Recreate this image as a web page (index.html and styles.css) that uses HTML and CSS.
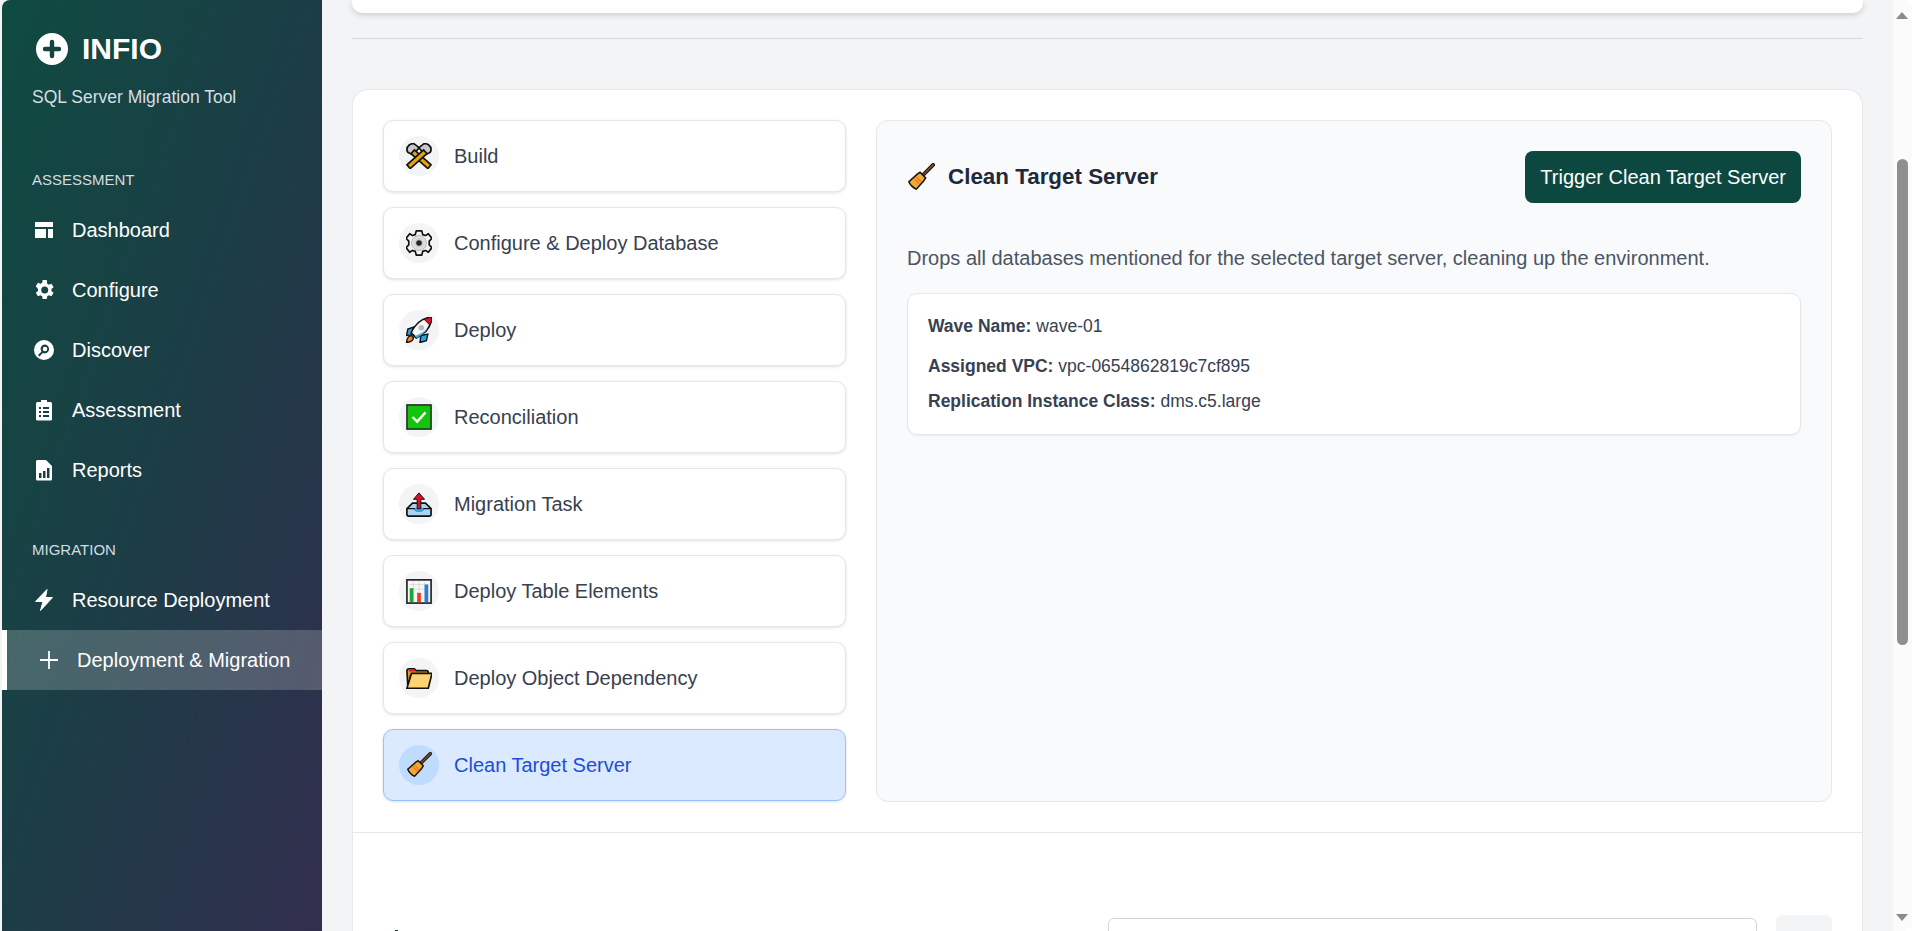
FILE: index.html
```html
<!DOCTYPE html>
<html lang="en">
<head>
<meta charset="utf-8">
<title>INFIO</title>
<link rel="stylesheet" href="styles.css">
</head>
<body>
<aside class="sidebar">
  <div class="brand">
    <svg class="brand-icon" viewBox="0 0 32 32"><circle cx="16" cy="16" r="16" fill="#fff"/><path d="M16 9v14M9 16h14" stroke="#15443f" stroke-width="4.4" stroke-linecap="round"/></svg>
    <span class="brand-name">INFIO</span>
  </div>
  <p class="brand-sub">SQL Server Migration Tool</p>
  <h2 class="nav-head nav-head-first">ASSESSMENT</h2>
  <nav class="nav">
    <a class="nav-item"><svg class="nav-icon" viewBox="0 0 24 24"><path d="M3 4h18v5H3zM3 11h11v9H3zM16 11h5v9h-5z" fill="#fff"/></svg>Dashboard</a>
    <a class="nav-item"><svg class="nav-icon" viewBox="0 0 24 24"><path fill="#fff" d="M19.4 13a7.6 7.6 0 0 0 0-2l2.2-1.7-2.1-3.6-2.6 1a7.5 7.5 0 0 0-1.7-1L14.8 2h-4.2l-.4 2.7a7.5 7.5 0 0 0-1.7 1l-2.6-1-2.1 3.6L6 11a7.6 7.6 0 0 0 0 2l-2.2 1.7 2.1 3.6 2.6-1c.5.4 1.1.7 1.7 1l.4 2.7h4.2l.4-2.7c.6-.3 1.2-.6 1.7-1l2.6 1 2.1-3.6zM12.7 15.5a3.5 3.5 0 1 1 0-7 3.5 3.5 0 0 1 0 7z"/></svg>Configure</a>
    <a class="nav-item"><svg class="nav-icon" viewBox="0 0 24 24"><path fill="#fff" fill-rule="evenodd" d="M12 2a10 10 0 1 1 0 20 10 10 0 0 1 0-20zm1 4.5a4.5 4.5 0 0 0-3.6 7.2L6 17.1 7.4 18.500l3.400-3.400A4.500 4.500 0 1 0 13 6.500zm0 2.200a2.300 2.300 0 1 1 0 4.600 2.300 2.300 0 0 1 0-4.600z"/></svg>Discover</a>
    <a class="nav-item"><svg class="nav-icon" viewBox="0 0 24 24"><path fill="#fff" fill-rule="evenodd" d="M9 2h6v2h3.500A1.500 1.500 0 0 1 20 5.500V21a1.500 1.500 0 0 1-1.500 1.500h-13A1.500 1.500 0 0 1 4 21V5.500A1.500 1.500 0 0 1 5.500 4H9zM7 9v2h2V9zm4 0v2h6V9zm-4 4v2h2v-2zm4 0v2h6v-2zm-4 4v2h2v-2zm4 0v2h6v-2z"/></svg>Assessment</a>
    <a class="nav-item"><svg class="nav-icon" viewBox="0 0 24 24"><path fill="#fff" fill-rule="evenodd" d="M6 2h8l6 6v13a1.500 1.500 0 0 1-1.500 1.500h-13A1.500 1.500 0 0 1 4 21V3.500A1.500 1.500 0 0 1 6 2zm1 13v5h2.500v-5zm4-2v7h2.500v-7zm4-3v10h2.500V10z"/></svg>Reports</a>
  </nav>
  <h2 class="nav-head nav-head-second">MIGRATION</h2>
  <nav class="nav">
    <a class="nav-item"><svg class="nav-icon" viewBox="0 0 24 24"><path fill="#fff" stroke="#fff" stroke-linejoin="round" d="M15 1.500 3.500 13.500H11L8.500 22.500 20.500 9.500H13.500z"/></svg>Resource Deployment</a>
    <a class="nav-item nav-active"><svg class="nav-icon" viewBox="0 0 24 24"><path d="M12 3v18M3 12h18" stroke="#fff" stroke-width="1.800"/></svg>Deployment &amp; Migration</a>
  </nav>
</aside>

<main class="main">
  <div class="top-card"></div>
  <hr class="rule">
  <section class="card">
    <div class="split">
      <ul class="steps">
        <li class="step"><span class="bubble"><svg class="emoji" viewBox="2 2 28 28">
          <path d="M3 9C3 5 7 2 11 3l5 4-6 8-4-2C4 12.500 3 11 3 9z" fill="#c9c9c9" stroke="#111" stroke-width="1.800"/>
          <path d="M29 9c0-4-4-7-8-6l-5 4 6 8 4-2c2-.5 3-2 3-4z" fill="#c9c9c9" stroke="#111" stroke-width="1.800"/>
          <path d="M11 9.500 29 25.500 25.500 29.500 7.500 13.500z" fill="#e8a20c" stroke="#111" stroke-width="1.800"/>
          <path d="M21 9.500 3 25.500 6.500 29.500 24.500 13.500z" fill="#e8a20c" stroke="#111" stroke-width="1.800"/></svg></span>Build</li>
        <li class="step"><span class="bubble"><svg class="emoji" viewBox="2 2 28 28">
          <path fill="#f3f4f6" stroke="#111" stroke-width="1.800" stroke-linejoin="round" d="M13 3h6l1 4 3 1 3-2 4 5-3 3v4l3 3-4 5-3-2-3 1-1 4h-6l-1-4-3-1-3 2-4-5 3-3v-4l-3-3 4-5 3 2 3-1z"/>
          <circle cx="16" cy="16" r="8" fill="#e0e0e0" stroke="#b5b5b5"/><circle cx="16" cy="16" r="5" fill="#cfcfcf"/><circle cx="16" cy="16" r="3" fill="#222"/></svg></span>Configure &amp; Deploy Database</li>
        <li class="step"><span class="bubble"><svg class="emoji" viewBox="2 2 28 28">
          <path d="M10 13 4 15 2.500 22l7-1zM18 22l-1 7.500 7-2 1.500-7z" fill="#2aa7e0" stroke="#111" stroke-width="1.500"/>
          <path d="M8 22c-3 0-5 3-5.500 7.500 4-.5 7.500-2 7.500-5.500z" fill="#f28a1e" stroke="#111" stroke-width="1.500"/>
          <path d="M30 2C20 3 12 9 7.500 19l5.500 5.500C23 20 29 12 30 2z" fill="#f6f6f6" stroke="#111" stroke-width="1.800"/>
          <path d="M30 2c-3 .2-6 1-8.500 2.500L27.500 10.500C29 8 30 5 30 2z" fill="#d80f26" stroke="#111" stroke-width="1"/>
          <path d="M25.500 14c-2.500 4.500-6.500 8-12 10.500l-2-2c5.500-2 10.500-5 14-8.500z" fill="#35b0e6"/>
          <circle cx="18.500" cy="13.500" r="3" fill="#bbb"/></svg></span>Deploy</li>
        <li class="step"><span class="bubble"><svg class="emoji" viewBox="2 2 28 28">
          <rect x="3" y="3" width="26" height="26" fill="#12c40c" stroke="#222" stroke-width="1.600"/>
          <path d="M9 16l5 5 9-10" fill="none" stroke="#fff" stroke-width="2.600"/></svg></span>Reconciliation</li>
        <li class="step"><span class="bubble"><svg class="emoji" viewBox="2 2 28 28">
          <path d="M10 15H9l-6 6v6c0 1 1 2 2 2h22c1 0 2-1 2-2v-6l-6-6h-1z" fill="#a6d4f2" stroke="#111" stroke-width="1.800"/>
          <path d="M3 21h8c1 3 9 3 10 0h8" fill="none" stroke="#111" stroke-width="1.500"/><ellipse cx="16" cy="22" rx="5" ry="2.500" fill="#3f9be0"/>
          <path d="M16 4l6 7h-4v10h-4V11h-4z" fill="#d80f26" stroke="#111"/></svg></span>Migration Task</li>
        <li class="step"><span class="bubble"><svg class="emoji" viewBox="2 2 28 28">
          <rect x="3" y="4" width="26" height="25" fill="#f6f6f6" stroke="#222" stroke-width="1.800"/>
          <path d="M6 14h20M6 9h20M10 6v21M16 6v21M22 6v21" stroke="#d5d5d5" stroke-width=".8"/>
          <rect x="6" y="13" width="4" height="15" fill="#19a832"/><rect x="14" y="18" width="4" height="10" fill="#f03a1c"/><rect x="22" y="9" width="4" height="19" fill="#2a7fd0"/></svg></span>Deploy Table Elements</li>
        <li class="step"><span class="bubble"><svg class="emoji" viewBox="2 2 28 28">
          <path d="M3 8c0-1 1-2 2-2h6l2 2h11c1 0 2 1 2 2v3H7l-3 13z" fill="#e79a16" stroke="#111" stroke-width="1.800"/>
          <path d="M5 7h7l1 2H5z" fill="#d82020"/>
          <path d="M8 11h22l-4 16H3z" fill="#fdd272" stroke="#111" stroke-width="1.800"/></svg></span>Deploy Object Dependency</li>
        <li class="step step-active"><span class="bubble"><svg class="emoji" viewBox="1 1 30 30">
          <path d="M29 3 18 14" stroke="#111" stroke-width="4" stroke-linecap="round"/><path d="M29 3 18 14" stroke="#7a4a22" stroke-width="2" stroke-linecap="round"/>
          <path d="M15 11l6 6-2 3-8 9c-3-1-7-5-8-8l9-8z" fill="#f0a934" stroke="#111" stroke-width="1.600"/><path d="M11 16l5 5M9 18l5 5" stroke="#ef6a2a" stroke-width="1.200"/></svg></span>Clean Target Server</li>
      </ul>
      <div class="detail">
        <div class="detail-head">
          <h3 class="detail-title"><svg class="emoji title-emoji" viewBox="1 1 30 30">
          <path d="M29 3 18 14" stroke="#111" stroke-width="4" stroke-linecap="round"/><path d="M29 3 18 14" stroke="#7a4a22" stroke-width="2" stroke-linecap="round"/>
          <path d="M15 11l6 6-2 3-8 9c-3-1-7-5-8-8l9-8z" fill="#f0a934" stroke="#111" stroke-width="1.600"/><path d="M11 16l5 5M9 18l5 5" stroke="#ef6a2a" stroke-width="1.200"/></svg>Clean Target Server</h3>
          <button class="trigger">Trigger Clean Target Server</button>
        </div>
        <p class="detail-desc">Drops all databases mentioned for the selected target server, cleaning up the environment.</p>
        <div class="info">
          <p class="info-first"><b>Wave Name:</b> wave-01</p>
          <p class="info-second"><b>Assigned VPC:</b> vpc-0654862819c7cf895</p>
          <p class="info-third"><b>Replication Instance Class:</b> dms.c5.large</p>
        </div>
      </div>
    </div>
    <div class="toolbar">
      <span class="toolbar-mark"></span>
      <div class="search"></div>
      <div class="tool-btn"></div>
    </div>
  </section>
</main>

<div class="scrollbar">
  <span class="arrow-up"></span>
  <span class="thumb"></span>
  <span class="arrow-down"></span>
</div>
</body>
</html>
```
FILE: styles.css
```css
* { box-sizing: border-box; }
html { margin: 0; height: 100%; background: #fff; overflow: hidden; }
body {
  margin: 0;
  display: flex;
  width: 1912px;
  height: 931px;
  overflow: hidden;
  background: #f3f4f6;
  border-radius: 0 10px 10px 0;
  font-family: "Liberation Sans", Arial, sans-serif;
  color: #1f2937;
}

.sidebar {
  flex: 0 0 320px;
  margin-left: 2px;
  height: 931px;
  padding: 32px 0 0;
  color: #fff;
  background: linear-gradient(to bottom right, #0f4b41 0%, #1c3d46 50%, #322e4e 100%);
  border-radius: 8px 0 0 0;
}
.brand { display: flex; align-items: center; gap: 14px; padding-left: 34px; }
.brand-icon { width: 32px; height: 32px; }
.brand-name { font-size: 30px; font-weight: 700; line-height: 34px; }
.brand-sub { margin: 20px 0 0 30px; font-size: 17.500px; line-height: 22px; color: #d6dee2; }
.nav-head { margin: 0; padding-left: 30px; font-size: 15px; font-weight: 400; line-height: 18px; color: #d5dbe0; }
.nav-head-first { margin-top: 63px; }
.nav-head-second { margin-top: 41px; }
.nav { display: flex; flex-direction: column; margin-top: 11px; }
.nav-item { display: flex; align-items: center; height: 60px; padding-left: 30px; font-size: 20px; }
.nav-head-first + .nav { margin-top: 11px; }
.nav-head-second + .nav { margin-top: 11px; }
.nav-icon { width: 24px; height: 24px; margin-right: 16px; flex: none; }
.nav-active { border-left: 5px solid #fff; background: rgba(255, 255, 255, .2); }

.main { flex: 1 1 0; min-width: 0; padding: 0 30px; height: 931px; overflow: hidden; }
.top-card { height: 13px; background: #fff; border-radius: 0 0 10px 10px; box-shadow: 0 2px 6px rgba(0, 0, 0, .16); }
.rule { margin: 25px 0 0; border: 0; border-top: 1px solid #d4d6e0; }
.card {
  margin-top: 50px;
  background: #fff;
  border: 1px solid #e5e7eb;
  border-bottom: 0;
  border-radius: 16px 16px 0 0;
  padding-top: 30px;
}
.split { display: flex; gap: 30px; padding: 0 30px; }
.steps { flex: 0 0 463px; list-style: none; margin: 0; padding: 0; display: flex; flex-direction: column; gap: 15px; }
.step {
  display: flex; align-items: center;
  height: 72px;
  padding-left: 15px;
  border: 1px solid #e5e7eb;
  border-radius: 10px;
  background: #fff;
  box-shadow: 0 1px 3px rgba(0, 0, 0, .12);
  font-size: 20px;
  color: #374151;
}
.bubble {
  flex: none;
  width: 40px; height: 40px;
  margin-right: 15px;
  display: flex; align-items: center; justify-content: center;
  background: #f3f4f6;
  border-radius: 50%;
}
.emoji { width: 26px; height: 26px; flex: none; }
.title-emoji { width: 28px; height: 28px; }
.step-active { background: #dbeafe; border-color: #93c5fd; color: #1d4ed8; }
.step-active .bubble { background: #bfdbfe; }

.detail {
  flex: 1 1 0;
  height: 682px;
  padding: 30px;
  background: #f9fafb;
  border: 1px solid #e5e7eb;
  border-radius: 12px;
}
.detail-head { display: flex; align-items: center; justify-content: space-between; height: 52px; }
.detail-title { display: flex; align-items: center; gap: 13px; margin: 0; font-size: 22.400px; font-weight: 700; color: #1f2937; }
.trigger {
  height: 52px;
  padding: 0 15px;
  border: 0;
  border-radius: 8px;
  background: #0d4840;
  color: #fff;
  font: 400 20px "Liberation Sans", Arial, sans-serif;
}
.detail-desc { margin: 42px 0 0; font-size: 20px; line-height: 26px; color: #4b5563; }
.info {
  height: 142px;
  margin-top: 22px;
  padding: 21px 20px 20px;
  background: #fff;
  border: 1px solid #e5e7eb;
  border-radius: 10px;
  box-shadow: 0 1px 2px rgba(0, 0, 0, .06);
  font-size: 17.500px;
  color: #374151;
}
.info p { margin: 0; line-height: 22px; }
.info-second { padding-top: 18px; }
.info-third { padding-top: 13px; }

.toolbar { position: relative; display: flex; align-items: flex-start; margin-top: 30px; padding: 82px 30px 0; height: 100px; border-top: 1px solid #e5e7eb; }
.toolbar-mark { position: absolute; left: 42px; top: 97px; width: 3px; height: 3px; background: #15443f; }
.search { flex: 0 0 649px; height: 40px; margin: 3px 19px 0 auto; border: 1px solid #d1d5db; border-radius: 6px; }
.tool-btn { flex: 0 0 56px; height: 40px; background: #f3f4f6; border-radius: 6px; }

.scrollbar {
  position: relative;
  flex: 0 0 19px;
  height: 931px;
  background: #fbfbfb;
}
.arrow-up, .arrow-down, .thumb { position: absolute; }
.arrow-up { left: 3px; top: 12px; border: 6.500px solid transparent; border-top: 0; border-bottom: 7px solid #8b8b8b; }
.arrow-down { left: 3px; bottom: 10px; border: 6.500px solid transparent; border-bottom: 0; border-top: 7px solid #8b8b8b; }
.thumb { left: 4px; top: 159px; width: 11px; height: 486px; background: #8f8f8f; border-radius: 6px; }
```
